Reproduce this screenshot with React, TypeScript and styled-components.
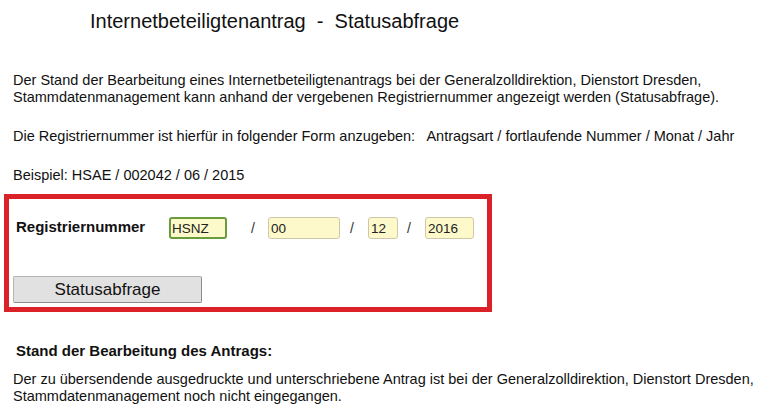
import React from "react";
import styled, { createGlobalStyle } from "styled-components";

const Global = createGlobalStyle`
  html, body { margin: 0; padding: 0; background: #ffffff; }
  body { font-family: Arial, "Liberation Sans", sans-serif; color: #111111; }
`;

const Page = styled.div`
  padding: 10px 0 0 4px;
  width: 757px;
`;

const Title = styled.h1`
  margin: 0 0 39px 86px;
  font-size: 20px;
  font-weight: normal;
  line-height: 23px;
  white-space: nowrap;
`;

const Para = styled.p<{ $gap?: number }>`
  margin: 0 0 ${(p) => p.$gap ?? 0}px 0;
  padding-left: 9px;
  font-size: 14.5px;
  line-height: 16.5px;
  white-space: nowrap;
`;

const FormBox = styled.div`
  box-sizing: border-box;
  width: 488px;
  border: 5px solid #dc2229;
  padding: 18px 0 4px 4px;
  margin-top: 11px;
`;

const FieldRow = styled.div`
  display: flex;
  align-items: center;
  height: 22px;
`;

const Label = styled.span`
  box-sizing: border-box;
  width: 156px;
  padding-left: 3px;
  font-size: 15px;
  font-weight: bold;
  line-height: 15px;
  position: relative;
  top: -2px;
`;

const Field = styled.input<{ $w: number; $focus?: boolean }>`
  box-sizing: border-box;
  width: ${(p) => p.$w}px;
  height: 22px;
  margin: 0;
  padding: 0 0 0 ${(p) => (p.$focus ? 1 : 2)}px;
  border: ${(p) => (p.$focus ? "2px solid #6a9c3b" : "1px solid #cfc8a8")};
  border-radius: 3px;
  background: #fdf9cb;
  font-family: Arial, "Liberation Sans", sans-serif;
  font-size: 13.5px;
  color: #222222;
  outline: none;
`;

const Sep = styled.span<{ $l: number; $r: number }>`
  margin: 0 ${(p) => p.$r}px 0 ${(p) => p.$l}px;
  font-size: 14px;
  color: #333333;
  width: 4px;
`;

const Button = styled.button`
  box-sizing: border-box;
  display: block;
  width: 189px;
  height: 27px;
  margin-top: 37px;
  padding: 0;
  background: #e1e1e1;
  border: 1px solid #b4b4b4;
  border-right-color: #8c8c8c;
  border-bottom-color: #8c8c8c;
  border-radius: 2px;
  font-family: Arial, "Liberation Sans", sans-serif;
  font-size: 17px;
  color: #111111;
  line-height: 25px;
`;

const Heading = styled.h2`
  margin: 31px 0 13px 0;
  padding-left: 12px;
  font-size: 15px;
  font-weight: bold;
  line-height: 15px;
`;

export default function App() {
  return (
    <>
      <Global />
      <Page>
        <Title>Internetbeteiligtenantrag&nbsp; - &nbsp;Statusabfrage</Title>
        <Para $gap={23}>
          Der Stand der Bearbeitung eines Internetbeteiligtenantrags bei der Generalzolldirektion, Dienstort Dresden,
          <br />
          Stammdatenmanagement kann anhand der vergebenen Registriernummer angezeigt werden (Statusabfrage).
        </Para>
        <Para $gap={22}>
          Die Registriernummer ist hierfür in folgender Form anzugeben:&nbsp;&nbsp; Antragsart / fortlaufende Nummer / Monat / Jahr
        </Para>
        <Para>Beispiel: HSAE / 002042 / 06 / 2015</Para>
        <FormBox>
          <FieldRow>
            <Label>Registriernummer</Label>
            <Field $w={58} $focus defaultValue="HSNZ" />
            <Sep $l={24} $r={13}>/</Sep>
            <Field $w={72} defaultValue="00" />
            <Sep $l={10} $r={14}>/</Sep>
            <Field $w={30} defaultValue="12" />
            <Sep $l={9} $r={14}>/</Sep>
            <Field $w={49} defaultValue="2016" />
          </FieldRow>
          <Button type="button">Statusabfrage</Button>
        </FormBox>
        <Heading>Stand der Bearbeitung des Antrags:</Heading>
        <Para>
          Der zu übersendende ausgedruckte und unterschriebene Antrag ist bei der Generalzolldirektion, Dienstort Dresden,
          <br />
          Stammdatenmanagement noch nicht eingegangen.
        </Para>
      </Page>
    </>
  );
}
